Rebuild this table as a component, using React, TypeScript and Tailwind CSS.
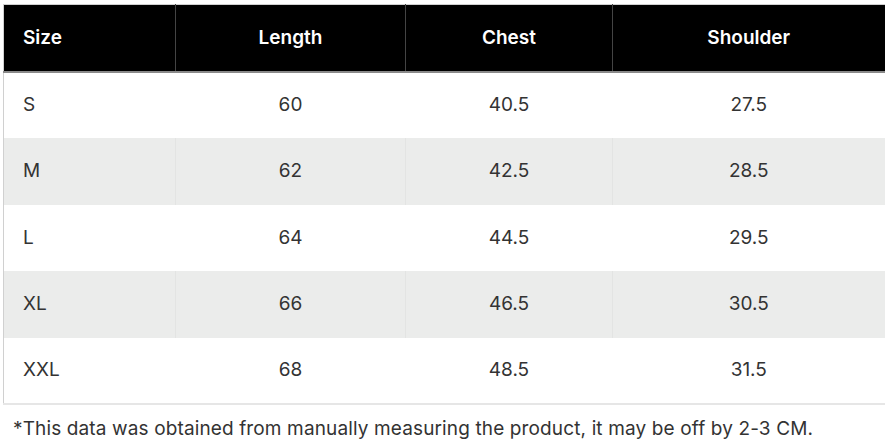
const rows = [
  ["S", "60", "40.5", "27.5"],
  ["M", "62", "42.5", "28.5"],
  ["L", "64", "44.5", "29.5"],
  ["XL", "66", "46.5", "30.5"],
  ["XXL", "68", "48.5", "31.5"],
];

export default function App() {
  return (
    <div className="min-h-screen bg-white pl-[3px] pt-[4px] font-['Inter',sans-serif] text-[#333]">
      <table className="w-[881px] table-fixed border-collapse border-t border-l border-[#d0d0d0]">
        <colgroup>
          <col className="w-[172px]" />
          <col className="w-[230px]" />
          <col className="w-[207px]" />
          <col className="w-[272px]" />
        </colgroup>
        <thead>
          <tr className="h-[67px] border-b-2 border-[#8a8a8a] bg-black text-[19px] font-semibold text-white">
            <th className="pl-[19px] text-left font-semibold">Size</th>
            <th className="border-l border-[#444] text-center font-semibold">Length</th>
            <th className="border-l border-[#444] text-center font-semibold">Chest</th>
            <th className="border-l border-[#444] text-center font-semibold">Shoulder</th>
          </tr>
        </thead>
        <tbody>
          {rows.map((r, i) => (
            <tr
              key={r[0]}
              className={`h-[66.6px] text-[19px] ${i % 2 === 1 ? "bg-[#ebeceb]" : "bg-white"} ${i === rows.length - 1 ? "border-b-2 border-[#e6e6e6]" : ""}`}
            >
              <td className="pl-[19px] text-left">{r[0]}</td>
              <td className={`text-center border-l ${i % 2 === 1 ? "border-[#e3e4e3]" : "border-white"}`}>{r[1]}</td>
              <td className={`text-center border-l ${i % 2 === 1 ? "border-[#e3e4e3]" : "border-white"}`}>{r[2]}</td>
              <td className={`text-center border-l ${i % 2 === 1 ? "border-[#e3e4e3]" : "border-white"}`}>{r[3]}</td>
            </tr>
          ))}
        </tbody>
      </table>
      <p className="mt-[11px] pl-[10px] text-[19px] leading-[26px] tracking-[0.13px] text-[#333]">
        *This data was obtained from manually measuring the product, it may be off by 2-3 CM.
      </p>
    </div>
  );
}
